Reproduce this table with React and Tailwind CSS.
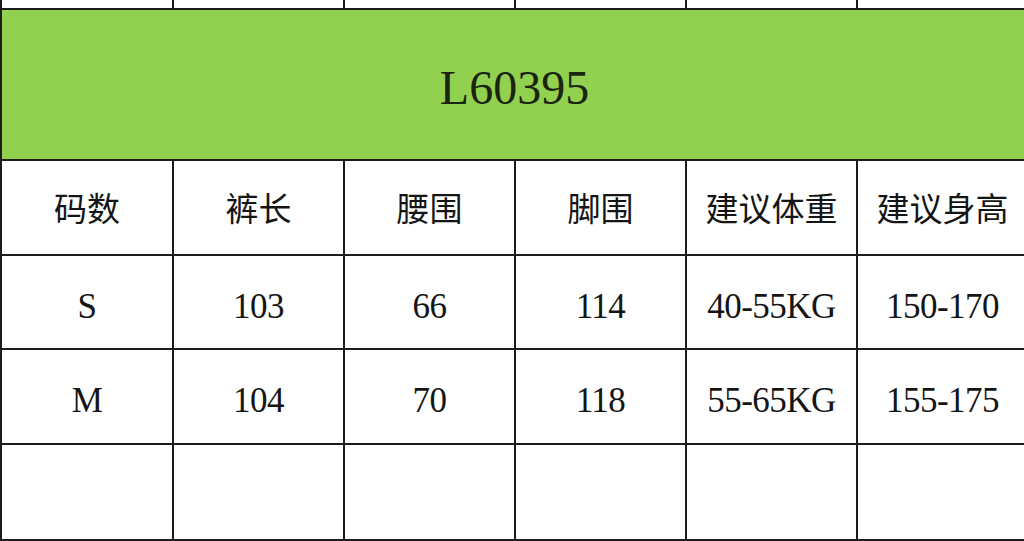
import React from 'react';

const headers = ['码数', '裤长', '腰围', '脚围', '建议体重', '建议身高'];
const rows = [
    ['S', '103', '66', '114', '40-55KG', '150-170'],
    ['M', '104', '70', '118', '55-65KG', '155-175'],
    ['', '', '', '', '', ''],
];

const cjk = { fontFamily: '"Noto Sans CJK SC", "Noto Sans", sans-serif' };
const serif = { fontFamily: '"Liberation Serif", "Noto Sans CJK SC", serif' };

const App = () => {
    return (
        <div className="w-[1024px] h-[541px] overflow-hidden bg-white">
            <div className="grid grid-cols-[170px_repeat(5,169px)] grid-rows-[8px_149px_93px_92px_93px_94px] gap-[2px] bg-[#1c1c1c] pl-[2px] pb-[2px] w-max">
                {/* top sliver of previous row */}
                {headers.map((h) => (
                    <div key={`top-${h}`} className="bg-white" />
                ))}

                {/* model number banner */}
                <div
                    className="col-span-6 bg-[#92d050] flex items-center justify-center text-[48px] text-[#1a2410] pt-[6px]"
                    style={serif}
                >
                    L60395
                </div>

                {/* header */}
                {headers.map((h) => (
                    <div
                        key={h}
                        className="bg-white flex items-center justify-center text-[33px] text-[#151515] leading-none"
                        style={cjk}
                    >
                        {h}
                    </div>
                ))}

                {/* size rows */}
                {rows.map((row, i) =>
                    row.map((cell, j) => (
                        <div
                            key={`${i}-${j}`}
                            className="bg-white flex items-center justify-center pt-[8px]"
                        >
                            <span
                                className="text-[35px] text-[#151515] leading-none tracking-[-0.5px]"
                                style={serif}
                            >
                                {cell}
                            </span>
                        </div>
                    ))
                )}
            </div>
        </div>
    );
};

export default App;
